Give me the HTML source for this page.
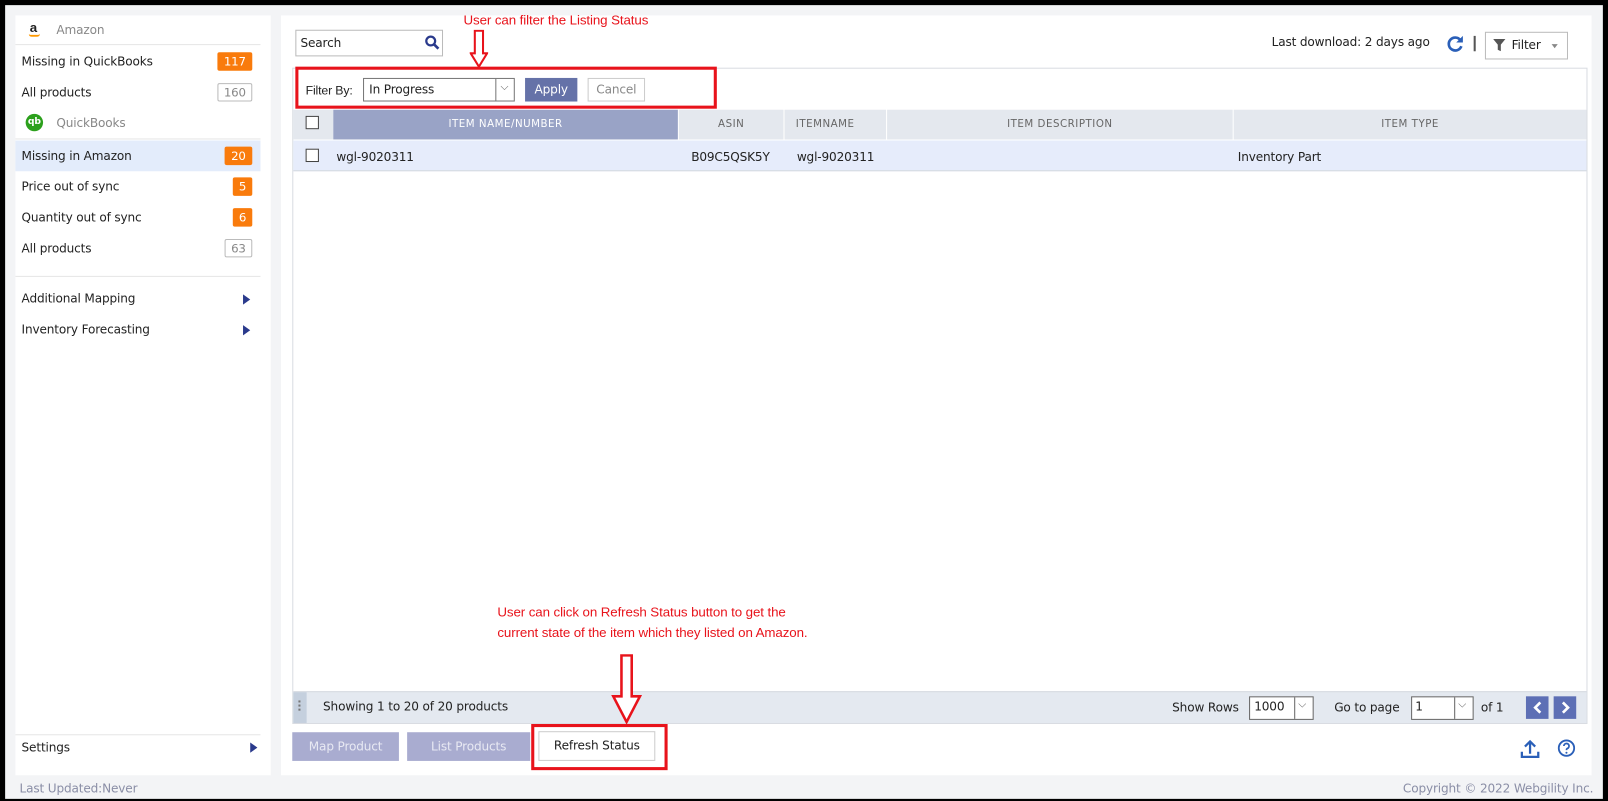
<!DOCTYPE html>
<html><head><meta charset="utf-8"><style>
*{box-sizing:border-box;margin:0;padding:0}
html,body{width:1608px;height:801px;background:#000;overflow:hidden}
.wrap{position:absolute;left:0;top:0;width:1568px;height:781px;transform:scale(1.02551);transform-origin:0 0;font-family:"DejaVu Sans","Liberation Sans",sans-serif;font-size:11.8px;color:#222;letter-spacing:-0.15px}
.a{position:absolute}
.bg{left:5px;top:5px;width:1598px;height:774px;background:#f3f4f6}
.panel{background:#fff}
.badge{position:absolute;height:18px;line-height:18px;text-align:center;border-radius:2px;font-size:11.5px}
.or{background:#f97b0c;color:#fff}
.gr{border:1px solid #bbb;color:#888;background:#fff;line-height:16px}
.sl{position:absolute;left:21px}
.hr{position:absolute;left:15px;width:239px;height:1px;background:#e6e6e6}
.tri{position:absolute;width:0;height:0;border-top:5px solid transparent;border-bottom:5px solid transparent;border-left:7px solid #2a3a8c}
.red{color:#e8131b;font-family:"Liberation Sans",sans-serif;font-size:13px;letter-spacing:-0.1px}
.th{position:absolute;top:107px;height:29px;line-height:29px;text-align:center;font-size:10px;letter-spacing:0.5px;color:#666;background:#e4e8ee}
</style></head><body><div class="wrap">
<div class="a bg" style="width:1558px;height:774px"></div>
<div class="a panel" style="left:15px;top:15px;width:249px;height:741px"></div>
<div class="a" style="left:29px;top:19px;font-weight:bold;font-size:13px;font-family:'Liberation Sans'">a</div>
<div class="a" style="left:28px;top:33px;width:11px;height:3px;border-bottom:2px solid #f90;border-radius:0 0 8px 8px"></div>
<div class="a" style="left:55px;top:22px;color:#888">Amazon</div>
<div class="hr" style="top:43px"></div>
<div class="sl" style="top:53px">Missing in QuickBooks</div><div class="badge or" style="left:212px;top:51px;width:34px">117</div>
<div class="sl" style="top:83px">All products</div><div class="badge gr" style="left:212px;top:81px;width:34px">160</div>
<div class="a" style="left:25px;top:111px;width:17px;height:17px;border-radius:50%;background:#2ca01c;color:#fff;font-size:9px;line-height:17px;text-align:center;font-weight:bold">qb</div>
<div class="a" style="left:55px;top:113px;color:#888">QuickBooks</div>
<div class="hr" style="top:135px"></div>
<div class="a" style="left:15px;top:137px;width:239px;height:30px;background:#e3ecfb"></div>
<div class="sl" style="top:145px">Missing in Amazon</div><div class="badge or" style="left:219px;top:143px;width:27px">20</div>
<div class="sl" style="top:175px">Price out of sync</div><div class="badge or" style="left:227px;top:173px;width:19px">5</div>
<div class="sl" style="top:205px">Quantity out of sync</div><div class="badge or" style="left:227px;top:203px;width:19px">6</div>
<div class="sl" style="top:235px">All products</div><div class="badge gr" style="left:219px;top:233px;width:27px">63</div>
<div class="hr" style="top:269px"></div>
<div class="sl" style="top:284px">Additional Mapping</div><div class="tri" style="left:237px;top:287px"></div>
<div class="sl" style="top:314px">Inventory Forecasting</div><div class="tri" style="left:237px;top:317px"></div>
<div class="hr" style="top:716px"></div>
<div class="sl" style="top:722px">Settings</div><div class="tri" style="left:244px;top:724px"></div>
<div class="a" style="left:19px;top:762px;color:#8a8ea6">Last Updated:Never</div>
<div class="a" style="left:1368px;top:762px;color:#8a8ea6">Copyright © 2022 Webgility Inc.</div>
<div class="a panel" style="left:274px;top:15px;width:1278px;height:741px"></div>
<div class="a" style="left:288px;top:29px;width:144px;height:26px;border:1px solid #bbb;background:#fff"></div>
<div class="a" style="left:293px;top:35px">Search</div>
<svg class="a" style="left:414px;top:34px" width="15" height="15" viewBox="0 0 15 15"><circle cx="6" cy="6" r="4.3" fill="none" stroke="#2a3a8c" stroke-width="2.2"/><path d="M9 9l4.5 4.5" stroke="#2a3a8c" stroke-width="2.6"/></svg>
<div class="a red" style="left:452px;top:12px">User can filter the Listing Status</div>
<svg class="a" style="left:458px;top:29px" width="18" height="38" viewBox="0 0 18 38"><path d="M5 1h8v22h4L9 36 1 23h4z" fill="#fff" stroke="#e8131b" stroke-width="2"/></svg>
<div class="a" style="left:1240px;top:34px">Last download: 2 days ago</div>
<svg class="a" style="left:1410px;top:34px" width="18" height="18" viewBox="0 0 18 18"><path d="M14 5A6.3 6.3 0 1 0 15 11" fill="none" stroke="#2a5fb8" stroke-width="2.6"/><path d="M16.5 1v6.5H10z" fill="#2a5fb8"/></svg>
<div class="a" style="left:1437px;top:35px;width:2px;height:15px;background:#555"></div>
<div class="a" style="left:1448px;top:31px;width:81px;height:27px;border:1px solid #bbb;background:#fff"></div>
<svg class="a" style="left:1456px;top:38px" width="12" height="12" viewBox="0 0 12 12"><path d="M0 0h12L7.5 5.5V12L4.5 10.5V5.5z" fill="#555"/></svg>
<div class="a" style="left:1474px;top:37px">Filter</div>
<div class="a" style="left:1513px;top:43px;border-left:3px solid transparent;border-right:3px solid transparent;border-top:4px solid #888"></div>
<div class="a" style="left:285px;top:66px;width:1263px;height:640px;border:1px solid #d9dce2;background:#fff"></div>
<div class="a" style="left:288px;top:65px;width:411px;height:41px;border:3px solid #e8131b"></div>
<div class="a" style="left:298px;top:81px;font-family:'Liberation Sans';font-size:12px">Filter By:</div>
<div class="a" style="left:354px;top:76px;width:148px;height:23px;border:1px solid #777;background:#fff"></div>
<div class="a" style="left:360px;top:80px">In Progress</div>
<div class="a" style="left:483px;top:77px;width:1px;height:21px;background:#777"></div>
<div class="a" style="left:488px;top:80px;color:#666;font-size:10px">⌵</div>
<div class="a" style="left:512px;top:76px;width:51px;height:23px;background:#6572a8;color:#fff;text-align:center;line-height:23px">Apply</div>
<div class="a" style="left:573px;top:76px;width:56px;height:23px;border:1px solid #ccc;color:#888;text-align:center;line-height:21px">Cancel</div>
<div class="th" style="left:286px;width:39px"></div>
<div class="a" style="left:298px;top:113px;width:13px;height:13px;border:1px solid #444;background:#fff"></div>
<div class="th" style="left:325px;width:336px;background:#99a3c6;color:#fff">ITEM NAME/NUMBER</div>
<div class="th" style="left:662px;width:102px">ASIN</div>
<div class="th" style="left:765px;width:99px;text-align:left;padding-left:11px">ITEMNAME</div>
<div class="th" style="left:865px;width:337px">ITEM DESCRIPTION</div>
<div class="th" style="left:1203px;width:344px">ITEM TYPE</div>
<div class="a" style="left:286px;top:137px;width:1261px;height:30px;background:#e6ecfb;border-bottom:1px solid #d5d9e0"></div>
<div class="a" style="left:298px;top:145px;width:13px;height:13px;border:1px solid #444;background:#fff"></div>
<div class="a" style="left:328px;top:146px">wgl-9020311</div>
<div class="a" style="left:674px;top:146px">B09C5QSK5Y</div>
<div class="a" style="left:777px;top:146px">wgl-9020311</div>
<div class="a" style="left:1207px;top:146px">Inventory Part</div>
<div class="a red" style="left:485px;top:587px;line-height:20px">User can click on Refresh Status button to get the<br>current state of the item which they listed on Amazon.</div>
<div class="a" style="left:286px;top:674px;width:1261px;height:31px;background:#e4e9f0;border-top:1px solid #d5d9e0"></div>
<div class="a" style="left:286px;top:675px;width:13px;height:30px;background:#c5d0de"></div>
<div class="a" style="left:291px;top:683px;width:2px;height:2px;background:#777;box-shadow:0 4px #777,0 8px #777"></div>
<div class="a" style="left:315px;top:682px">Showing 1 to 20 of 20 products</div>
<svg class="a" style="left:596px;top:638px" width="30" height="68" viewBox="0 0 30 68"><path d="M10 1h10v40h8L15 66 2 41h8z" fill="#fff" stroke="#e8131b" stroke-width="2.5"/></svg>
<div class="a" style="left:1143px;top:683px">Show Rows</div>
<div class="a" style="left:1218px;top:679px;width:63px;height:23px;border:1px solid #666;background:#fff"></div>
<div class="a" style="left:1223px;top:682px">1000</div>
<div class="a" style="left:1262px;top:680px;width:1px;height:21px;background:#666"></div>
<div class="a" style="left:1266px;top:682px;color:#666;font-size:10px">⌵</div>
<div class="a" style="left:1301px;top:683px">Go to page</div>
<div class="a" style="left:1376px;top:679px;width:61px;height:23px;border:1px solid #666;background:#fff"></div>
<div class="a" style="left:1380px;top:682px">1</div>
<div class="a" style="left:1418px;top:680px;width:1px;height:21px;background:#666"></div>
<div class="a" style="left:1422px;top:682px;color:#666;font-size:10px">⌵</div>
<div class="a" style="left:1444px;top:683px">of 1</div>
<div class="a" style="left:1488px;top:679px;width:22px;height:22px;background:#5d6fb5"></div>
<div class="a" style="left:1515px;top:679px;width:22px;height:22px;background:#5d6fb5"></div>
<svg class="a" style="left:1488px;top:679px" width="50" height="22" viewBox="0 0 50 22"><path d="M14 6l-5 5 5 5M36 6l5 5-5 5" fill="none" stroke="#fff" stroke-width="2.6"/></svg>
<div class="a" style="left:285px;top:714px;width:104px;height:28px;background:#a9acd0;color:#e8e9f3;text-align:center;line-height:28px">Map Product</div>
<div class="a" style="left:397px;top:714px;width:120px;height:28px;background:#a9acd0;color:#e8e9f3;text-align:center;line-height:28px">List Products</div>
<div class="a" style="left:518px;top:706px;width:133px;height:45px;border:3px solid #e8131b"></div>
<div class="a" style="left:525px;top:713px;width:114px;height:29px;border:1px solid #ccc;background:#fff;text-align:center;line-height:27px">Refresh Status</div>
<svg class="a" style="left:1482px;top:720px" width="20" height="20" viewBox="0 0 20 20"><path d="M10 15V3M5 8l5-5 5 5M2 13v5h16v-5" fill="none" stroke="#2a5fb8" stroke-width="2.2"/></svg>
<svg class="a" style="left:1518px;top:720px" width="19" height="19" viewBox="0 0 19 19"><circle cx="9.5" cy="9.5" r="7.5" fill="none" stroke="#2a5fb8" stroke-width="1.8"/><path d="M7 7.5a2.5 2.5 0 1 1 3.2 2.4c-.6.3-.7.7-.7 1.6" fill="none" stroke="#2a5fb8" stroke-width="1.7"/><circle cx="9.5" cy="14" r="1" fill="#2a5fb8"/></svg>
</div></body></html>
